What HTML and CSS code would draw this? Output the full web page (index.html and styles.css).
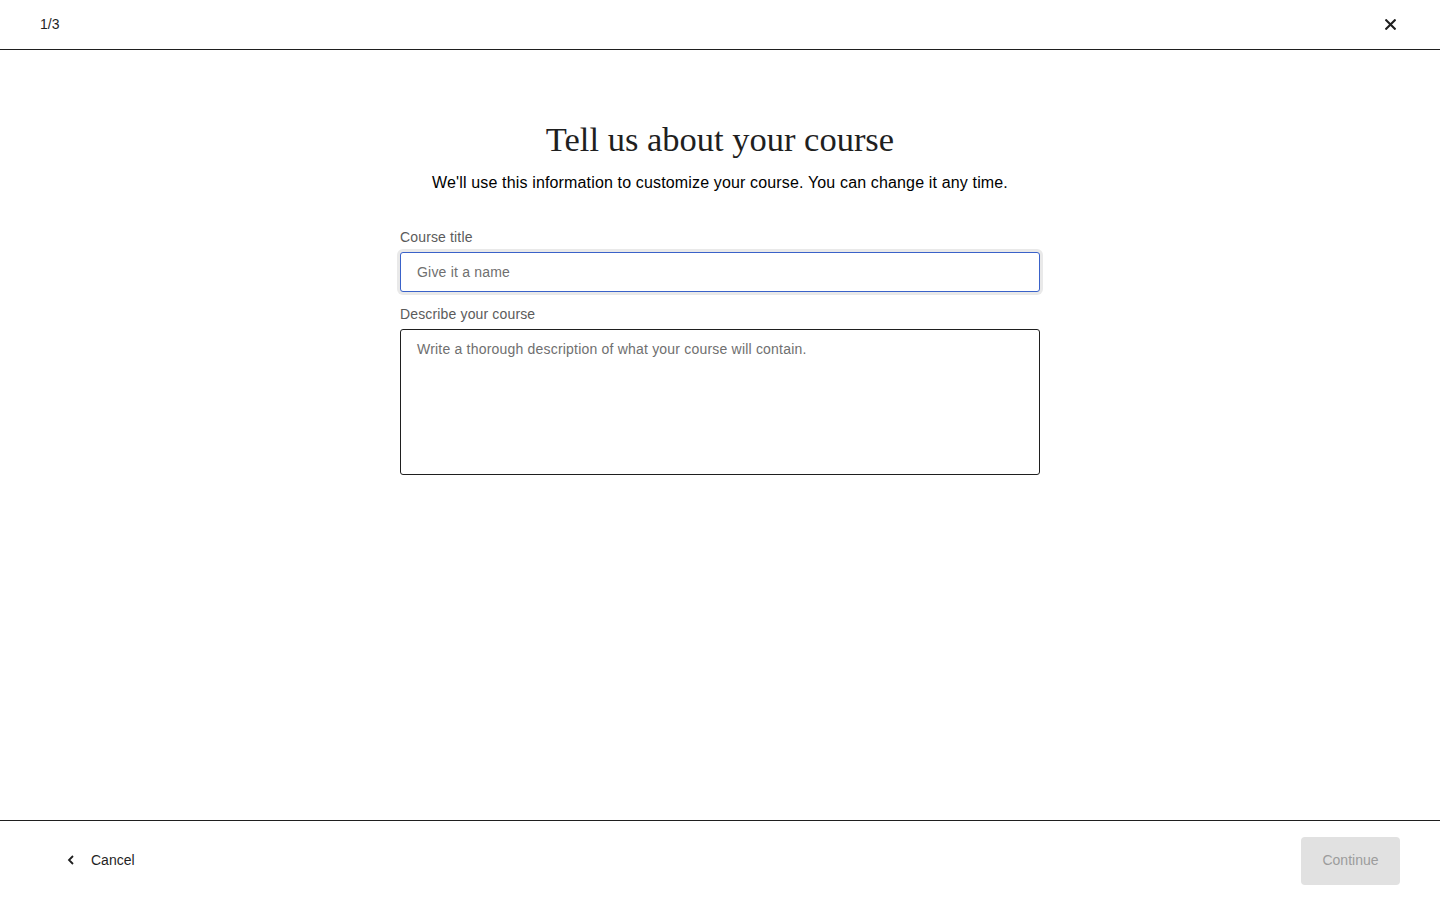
FILE: index.html
```html
<!DOCTYPE html>
<html>
<head>
<meta charset="utf-8">
<link rel="stylesheet" href="styles.css">
</head>
<body>
<div class="page">
  <header class="topbar">
    <span class="step">1/3</span>
    <button class="close" aria-label="Close">
      <svg width="11" height="11" viewBox="0 0 11 11"><path d="M1.2 1.2 L9.8 9.8 M9.8 1.2 L1.2 9.8" stroke="#1f1f1f" stroke-width="2.1" stroke-linecap="square"/></svg>
    </button>
  </header>
  <main class="main">
    <h1 class="title">Tell us about your course</h1>
    <p class="subtitle">We'll use this information to customize your course. You can change it any time.</p>
    <form class="form">
      <label class="label" for="t">Course title</label>
      <input id="t" class="input focused" type="text" placeholder="Give it a name">
      <label class="label" for="d">Describe your course</label>
      <textarea id="d" class="textarea" placeholder="Write a thorough description of what your course will contain."></textarea>
    </form>
  </main>
  <footer class="footer">
    <button class="cancel">
      <svg width="8" height="10" viewBox="0 0 8 10"><path d="M6 1 L2 5 L6 9" fill="none" stroke="#1f1f1f" stroke-width="1.8"/></svg>
      <span>Cancel</span>
    </button>
    <button class="continue" disabled>Continue</button>
  </footer>
</div>
</body>
</html>
```
FILE: styles.css
```css
* { box-sizing: border-box; }
html, body { margin: 0; padding: 0; height: 100%; }
body {
  font-family: "Liberation Sans", Arial, sans-serif;
  color: #1f1f1f;
  background: #fff;
}
.page {
  height: 100vh;
  display: flex;
  flex-direction: column;
}
.topbar {
  height: 50px;
  border-bottom: 1px solid #1f1f1f;
  display: flex;
  align-items: center;
  justify-content: space-between;
  padding: 0 44px 0 40px;
  flex-shrink: 0;
}
.step { font-size: 14px; color: #1f1f1f; margin-top: -2px; }
.close {
  border: none; background: none; padding: 0; margin: 0;
  width: 11px; height: 11px;
  display: flex; align-items: center; justify-content: center;
  cursor: pointer;
}
.main {
  flex: 1;
  display: flex;
  flex-direction: column;
  align-items: center;
  padding-top: 68px;
}
.title {
  margin: 0;
  font-family: "Liberation Serif", "Times New Roman", serif;
  font-weight: 400;
  font-size: 34.5px;
  line-height: 42px;
  color: #1f1f1f;
}
.subtitle {
  margin: 12px 0 0;
  font-size: 16px;
  line-height: 22px;
  letter-spacing: 0.15px;
  color: #000;
}
.form {
  width: 640px;
  margin-top: 34px;
  display: flex;
  flex-direction: column;
}
.label {
  font-size: 14px;
  line-height: 18px;
  letter-spacing: 0.15px;
  color: #5b5b5b;
  margin-bottom: 6px;
}
.input, .textarea {
  font-family: "Liberation Sans", Arial, sans-serif;
  font-size: 14px;
  letter-spacing: 0.2px;
  color: #1f1f1f;
  border: 1px solid #1f1f1f;
  border-radius: 3px;
  padding: 0 16px;
  outline: none;
  background: #fff;
}
.input::placeholder, .textarea::placeholder { color: #6f6f6f; }
.input {
  height: 40px;
  margin-bottom: 13px;
}
.input.focused {
  border-color: #3a62c9;
  box-shadow: 0 0 0 3px #e9e9e9;
}
.textarea {
  height: 146px;
  padding-top: 10px;
  resize: none;
  line-height: 18px;
}
.footer {
  height: 80px;
  border-top: 1px solid #1f1f1f;
  display: flex;
  align-items: center;
  justify-content: space-between;
  padding: 0 40px 0 66px;
  flex-shrink: 0;
}
.cancel {
  border: none; background: none; padding: 0;
  display: flex; align-items: center; gap: 16px;
  margin-bottom: 2px;
  font-family: "Liberation Sans", Arial, sans-serif;
  font-size: 14px; color: #1f1f1f;
  cursor: pointer;
}
.cancel svg { margin-left: 1px; }
.continue {
  width: 99px;
  height: 48px;
  border: none;
  border-radius: 4px;
  padding: 0 0 2px;
  background: #e1e1e1;
  color: #9c9c9c;
  font-family: "Liberation Sans", Arial, sans-serif;
  font-size: 14px;
}
```
